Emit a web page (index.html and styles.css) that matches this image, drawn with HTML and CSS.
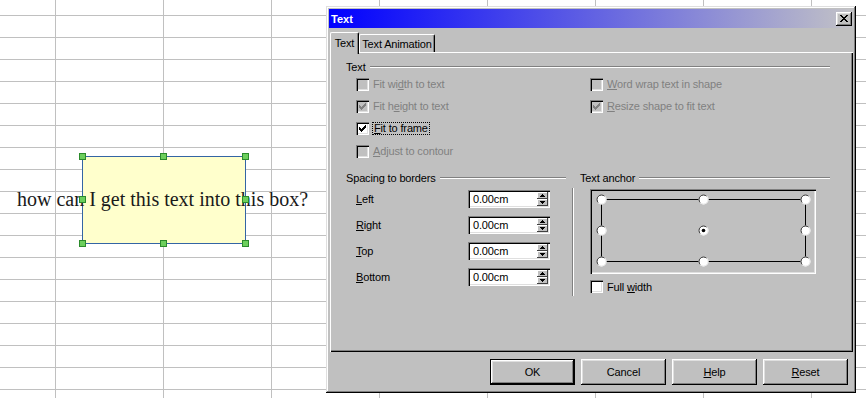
FILE: index.html
```html
<!DOCTYPE html>
<html lang="en">
<head>
    <meta charset="UTF-8">
    <title>Text</title>
    <link rel="stylesheet" href="styles.css">
</head>
<body>
    <div class="sheet">
        <div class="shape"></div>
        <div class="cell-text">how can I get this text into this box?</div>
        <div class="selection">
            <span class="handle tl"></span>
            <span class="handle tm"></span>
            <span class="handle tr"></span>
            <span class="handle ml"></span>
            <span class="handle mr"></span>
            <span class="handle bl"></span>
            <span class="handle bm"></span>
            <span class="handle br"></span>
        </div>

        <div class="dialog">
            <div class="titlebar">
                <span class="title">Text</span>
                <span class="close">
                    <svg width="8" height="7" viewBox="0 0 8 7"><path d="M0 0h2v1H0zM6 0h2v1H6zM1 1h2v1H1zM5 1h2v1H5zM2 2h4v1H2zM3 3h2v1H3zM2 4h4v1H2zM1 5h2v1H1zM5 5h2v1H5zM0 6h2v1H0zM6 6h2v1H6z"/></svg>
                </span>
            </div>

            <div class="tabs">
                <span class="tab active">Text</span>
                <span class="tab">Text Animation</span>
            </div>

            <div class="panel">
                <div class="group-head">Text</div>
                <div class="checks">
                    <label class="opt disabled"><span class="box"></span><span>Fit wi<u>d</u>th to text</span></label>
                    <label class="opt disabled"><span class="box"><svg width="13" height="13"><path class="tick" d="M9 3h1v1H9zM8 4h2v1H8zM3 5h1v1H3zM7 5h3v1H7zM3 6h2v1H3zM6 6h3v1H6zM3 7h5v1H3zM4 8h3v1H4zM5 9h1v1H5z"/></svg></span><span>Fit h<u>e</u>ight to text</span></label>
                    <label class="opt"><span class="box"><svg width="13" height="13"><path class="tick" d="M9 3h1v1H9zM8 4h2v1H8zM3 5h1v1H3zM7 5h3v1H7zM3 6h2v1H3zM6 6h3v1H6zM3 7h5v1H3zM4 8h3v1H4zM5 9h1v1H5z"/></svg></span><span class="focus"><u>F</u>it to frame</span></label>
                    <label class="opt disabled"><span class="box"></span><span><u>A</u>djust to contour</span></label>
                    <label class="opt disabled"><span class="box"></span><span><u>W</u>ord wrap text in shape</span></label>
                    <label class="opt disabled"><span class="box"><svg width="13" height="13"><path class="tick" d="M9 3h1v1H9zM8 4h2v1H8zM3 5h1v1H3zM7 5h3v1H7zM3 6h2v1H3zM6 6h3v1H6zM3 7h5v1H3zM4 8h3v1H4zM5 9h1v1H5z"/></svg></span><span><u>R</u>esize shape to fit text</span></label>
                </div>

                <div class="lower">
                    <div class="spacing">
                        <div class="group-head">Spacing to borders</div>
                        <div class="fields">
                            <div class="field">
                                <label><u>L</u>eft</label>
                                <span class="spin"><span class="value">0.00cm</span><span class="arrows"><span><svg width="5" height="3"><path d="M2 0h1v1h1v1h1v1H0V2h1V1h1z"/></svg></span><span><svg width="5" height="3"><path d="M0 0h5v1H4v1H3v1H2V2H1V1H0z"/></svg></span></span></span>
                            </div>
                            <div class="field">
                                <label><u>R</u>ight</label>
                                <span class="spin"><span class="value">0.00cm</span><span class="arrows"><span><svg width="5" height="3"><path d="M2 0h1v1h1v1h1v1H0V2h1V1h1z"/></svg></span><span><svg width="5" height="3"><path d="M0 0h5v1H4v1H3v1H2V2H1V1H0z"/></svg></span></span></span>
                            </div>
                            <div class="field">
                                <label><u>T</u>op</label>
                                <span class="spin"><span class="value">0.00cm</span><span class="arrows"><span><svg width="5" height="3"><path d="M2 0h1v1h1v1h1v1H0V2h1V1h1z"/></svg></span><span><svg width="5" height="3"><path d="M0 0h5v1H4v1H3v1H2V2H1V1H0z"/></svg></span></span></span>
                            </div>
                            <div class="field">
                                <label><u>B</u>ottom</label>
                                <span class="spin"><span class="value">0.00cm</span><span class="arrows"><span><svg width="5" height="3"><path d="M2 0h1v1h1v1h1v1H0V2h1V1h1z"/></svg></span><span><svg width="5" height="3"><path d="M0 0h5v1H4v1H3v1H2V2H1V1H0z"/></svg></span></span></span>
                            </div>
                        </div>
                    </div>

                    <div class="anchor">
                        <div class="group-head">Text anchor</div>
                        <div class="anchor-body">
                            <div class="anchor-box">
                                <svg width="226" height="85" viewBox="0 0 226 85">
                                    <defs>
                                        <g id="pt">
                                            <circle r="5" fill="#fff"/>
                                            <path d="M3.2 -3.2A4.5 4.5 0 0 0 -3.2 3.2" fill="none" stroke="#202020"/>
                                            <path d="M3.2 -3.2A4.5 4.5 0 0 1 -3.2 3.2" fill="none" stroke="#e8e8e8"/>
                                        </g>
                                    </defs>
                                    <rect x="11.5" y="10.5" width="204" height="62" fill="none" stroke="#000"/>
                                    <use href="#pt" x="11.5" y="10.5"/>
                                    <use href="#pt" x="113.5" y="10.5"/>
                                    <use href="#pt" x="215.5" y="10.5"/>
                                    <use href="#pt" x="11.5" y="41.5"/>
                                    <use href="#pt" x="113.5" y="41.5"/>
                                    <use href="#pt" x="215.5" y="41.5"/>
                                    <use href="#pt" x="11.5" y="72.5"/>
                                    <use href="#pt" x="113.5" y="72.5"/>
                                    <use href="#pt" x="215.5" y="72.5"/>
                                    <circle cx="113.5" cy="41.5" r="1.8" fill="#000"/>
                                </svg>
                            </div>
                            <label class="opt full"><span class="box"></span><span>Full <u>w</u>idth</span></label>
                        </div>
                    </div>
                </div>
            </div>

            <div class="buttons">
                <button type="button" class="btn default">OK</button>
                <button type="button" class="btn">Cancel</button>
                <button type="button" class="btn"><u>H</u>elp</button>
                <button type="button" class="btn"><u>R</u>eset</button>
            </div>
        </div>
    </div>
</body>
</html>
```

FILE: styles.css
```css
body{
    margin: 0;
}
.sheet{
    position: relative;
    width: 866px;
    height: 398px;
    overflow: hidden;
    background-color: #fff;
    background-image:
        linear-gradient(to right, #c0c0c0 1px, transparent 1px),
        linear-gradient(to bottom, #c0c0c0 1px, transparent 1px);
    background-size: 108px 100%, 100% 22px;
    background-position: 55px 0, 0 15px;
}

/* drawing object on the sheet */
.shape{
    position: absolute;
    left: 82px;
    top: 156px;
    width: 164px;
    height: 88px;
    box-sizing: border-box;
    background-color: #ffffcc;
    border: 1px solid #3465a4;
}
.cell-text{
    position: absolute;
    left: 17px;
    top: 189px;
    font: 20px/20px "Liberation Serif", serif;
    color: #1a1a1a;
    white-space: nowrap;
}
.selection{
    position: absolute;
    left: 82px;
    top: 156px;
    width: 164px;
    height: 88px;
}
.handle{
    position: absolute;
    width: 7px;
    height: 7px;
    box-sizing: border-box;
    background-color: #6ccf5c;
    border: 1px solid #2b8a2b;
}
.tl{ left: -3px; top: -3px; }
.tm{ left: 78px; top: -3px; }
.tr{ right: -3px; top: -3px; }
.ml{ left: -3px; top: 40px; }
.mr{ right: -3px; top: 40px; }
.bl{ left: -3px; bottom: -3px; }
.bm{ left: 78px; bottom: -3px; }
.br{ right: -3px; bottom: -3px; }

/* dialog window */
.dialog{
    position: absolute;
    left: 326px;
    top: 6px;
    width: 530px;
    height: 387px;
    box-sizing: border-box;
    padding: 3px;
    display: flex;
    flex-direction: column;
    background-color: #c0c0c0;
    box-shadow: inset -1px -1px #000, inset 1px 1px #dfdfdf, inset -2px -2px #808080, inset 2px 2px #fff;
    font: 11px "Liberation Sans", Arial, sans-serif;
    letter-spacing: -0.15px;
    color: #000;
}
.titlebar{
    height: 19px;
    flex: none;
    display: flex;
    align-items: center;
    justify-content: space-between;
    padding: 0 1px 0 2px;
    background: linear-gradient(to right, #0000ff, #c2c2c6);
}
.title{
    color: #fff;
    font-weight: bold;
    letter-spacing: 0;
}
.close{
    width: 16px;
    height: 14px;
    display: flex;
    align-items: center;
    justify-content: center;
    background-color: #c0c0c0;
    box-shadow: inset -1px -1px #000, inset 1px 1px #fff, inset -2px -2px #808080, inset 2px 2px #dfdfdf;
}

.tabs{
    position: relative;
    z-index: 1;
    flex: none;
    height: 20px;
    margin-top: 4px;
    padding-left: 1px;
    display: flex;
    align-items: flex-end;
}
.tab{
    height: 18px;
    width: 76px;
    box-sizing: border-box;
    display: flex;
    align-items: center;
    justify-content: center;
    border: 1px solid #fff;
    border-right-color: #000;
    border-bottom: none;
    border-radius: 2px 2px 0 0;
    box-shadow: inset -1px 0 #808080;
    background-color: #c0c0c0;
}
.tab.active{
    width: 29px;
    height: 22px;
    margin-bottom: -2px;
    padding-bottom: 2px;
}

.panel{
    flex: none;
    height: 300px;
    margin-left: 1px;
    box-sizing: border-box;
    padding: 8px 23px 0 16px;
    box-shadow: inset 1px 1px #fff, inset -1px -1px #000, inset -2px -2px #808080;
}
.group-head{
    display: flex;
    align-items: center;
    gap: 4px;
    height: 14px;
}
.group-head::after{
    content: "";
    flex: 1;
    border-top: 1px solid #808080;
    border-bottom: 1px solid #fff;
}

.checks{
    display: grid;
    grid-template-columns: 234px 1fr;
    grid-template-rows: 22px 22px 23px 22px;
    grid-auto-flow: column;
    margin-top: -1px;
    padding-left: 10px;
}
.opt{
    display: flex;
    align-items: center;
    gap: 4px;
}
.opt.disabled{
    color: #808080;
}
.box{
    width: 13px;
    height: 13px;
    flex: none;
    display: block;
    background-color: #fff;
    box-shadow: inset 1px 1px #808080, inset 2px 2px #000, inset -1px -1px #fff, inset -2px -2px #dfdfdf;
}
.box svg{
    display: block;
}
.tick{
    fill: #000;
}
.disabled .box{
    background-color: #c0c0c0;
}
.disabled .tick{
    fill: #808080;
}
.focus{
    outline: 1px dotted #000;
    padding: 0 1px;
    line-height: 11px;
}

.lower{
    display: grid;
    grid-template-columns: 220px 1fr;
    column-gap: 14px;
    margin-top: 9px;
}
.fields{
    margin-top: 1px;
    padding-left: 10px;
}
.field{
    display: flex;
    align-items: center;
    height: 26px;
}
.field label{
    width: 112px;
}
.spin{
    width: 82px;
    height: 18px;
    box-sizing: border-box;
    padding: 2px;
    display: flex;
    background-color: #fff;
    box-shadow: inset 1px 1px #808080, inset 2px 2px #000, inset -1px -1px #fff, inset -2px -2px #dfdfdf;
}
.value{
    flex: 1;
    padding-left: 3px;
    line-height: 14px;
}
.arrows{
    width: 11px;
    display: flex;
    flex-direction: column;
}
.arrows span{
    flex: 1;
    display: flex;
    align-items: center;
    justify-content: center;
    background-color: #c0c0c0;
    box-shadow: inset -1px -1px #404040, inset 1px 1px #fff;
}
.arrows svg{
    display: block;
}

.anchor-body{
    margin: 3px 0 0 -8px;
    padding: 1px 0 0 17px;
    border-left: 1px solid #808080;
    box-shadow: inset 1px 0 #fff;
}
.anchor-box{
    width: 226px;
    height: 85px;
    box-shadow: inset 1px 1px #808080, inset 2px 2px #000, inset -1px -1px #fff, inset -2px -2px #dfdfdf;
}
.anchor-box svg{
    display: block;
}
.opt.full{
    height: 19px;
    margin-top: 3px;
}

.buttons{
    flex: none;
    display: flex;
    justify-content: flex-end;
    gap: 6px;
    margin-top: 7px;
    padding-right: 5px;
}
.btn{
    width: 85px;
    height: 26px;
    padding: 0;
    border: none;
    font: inherit;
    letter-spacing: inherit;
    color: #000;
    background-color: #c0c0c0;
    box-shadow: inset -1px -1px #000, inset 1px 1px #fff, inset -2px -2px #808080, inset 2px 2px #dfdfdf;
}
.btn.default{
    box-shadow: inset 0 0 0 1px #000, inset -2px -2px #000, inset 2px 2px #fff, inset -3px -3px #808080, inset 3px 3px #dfdfdf;
}
```
